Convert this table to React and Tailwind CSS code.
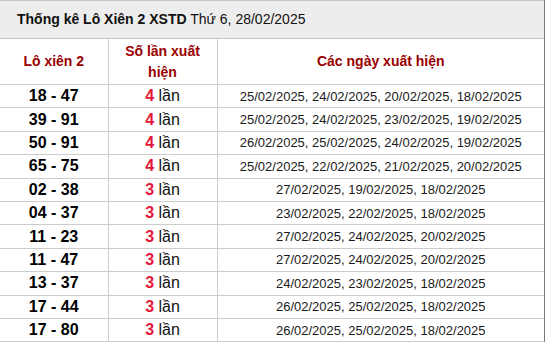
import React from 'react';

const rows = [
    { pair: '18 - 47', count: 4, dates: '25/02/2025, 24/02/2025, 20/02/2025, 18/02/2025' },
    { pair: '39 - 91', count: 4, dates: '25/02/2025, 24/02/2025, 23/02/2025, 19/02/2025' },
    { pair: '50 - 91', count: 4, dates: '26/02/2025, 25/02/2025, 24/02/2025, 19/02/2025' },
    { pair: '65 - 75', count: 4, dates: '25/02/2025, 22/02/2025, 21/02/2025, 20/02/2025' },
    { pair: '02 - 38', count: 3, dates: '27/02/2025, 19/02/2025, 18/02/2025' },
    { pair: '04 - 37', count: 3, dates: '23/02/2025, 22/02/2025, 18/02/2025' },
    { pair: '11 - 23', count: 3, dates: '27/02/2025, 24/02/2025, 20/02/2025' },
    { pair: '11 - 47', count: 3, dates: '27/02/2025, 24/02/2025, 20/02/2025' },
    { pair: '13 - 37', count: 3, dates: '24/02/2025, 23/02/2025, 18/02/2025' },
    { pair: '17 - 44', count: 3, dates: '26/02/2025, 25/02/2025, 18/02/2025' },
    { pair: '17 - 80', count: 3, dates: '26/02/2025, 25/02/2025, 18/02/2025' },
];

export default function App() {
    return (
        <div className="w-[545px] bg-white font-['Liberation_Sans',Arial,sans-serif]">
            <div className="w-[545px] border-r border-[#7a7a7a]">
                <table className="w-full border-collapse table-fixed">
                    <colgroup>
                        <col className="w-[108px]" />
                        <col className="w-[109px]" />
                        <col />
                    </colgroup>
                    <thead>
                        {/* tiêu đề */}
                        <tr>
                            <th colSpan="3" className="h-[38px] bg-[#eeeded] border-y border-[#c4c4c4] text-left pl-[17px] text-[14px] text-[#111] font-normal">
                                <span className="font-bold">Thống kê Lô Xiên 2 XSTD</span> Thứ 6, 28/02/2025
                            </th>
                        </tr>
                        <tr className="h-[46px] text-[14px] font-bold text-[#990000]">
                            <th className="border-b border-r border-[#cccccc] px-1 leading-[21px]">Lô xiên 2</th>
                            <th className="border-b border-r border-[#cccccc] px-2 leading-[21px]">Số lần xuất hiện</th>
                            <th className="border-b border-[#cccccc] px-1 leading-[21px]">Các ngày xuất hiện</th>
                        </tr>
                    </thead>
                    <tbody>
                        {rows.map((r) => (
                            <tr key={r.pair} className="h-[23.4px]">
                                <td className="border-b border-r border-[#cccccc] text-center text-[16px] font-bold text-black leading-none">{r.pair}</td>
                                <td className="border-b border-r border-[#cccccc] text-center text-[16px] text-[#111] leading-none">
                                    <span className="font-bold text-[#e4173a]">{r.count}</span> lần
                                </td>
                                <td className="border-b border-[#cccccc] text-center text-[13px] text-[#1a1a1a] leading-none">{r.dates}</td>
                            </tr>
                        ))}
                    </tbody>
                </table>
            </div>
        </div>
    );
}
